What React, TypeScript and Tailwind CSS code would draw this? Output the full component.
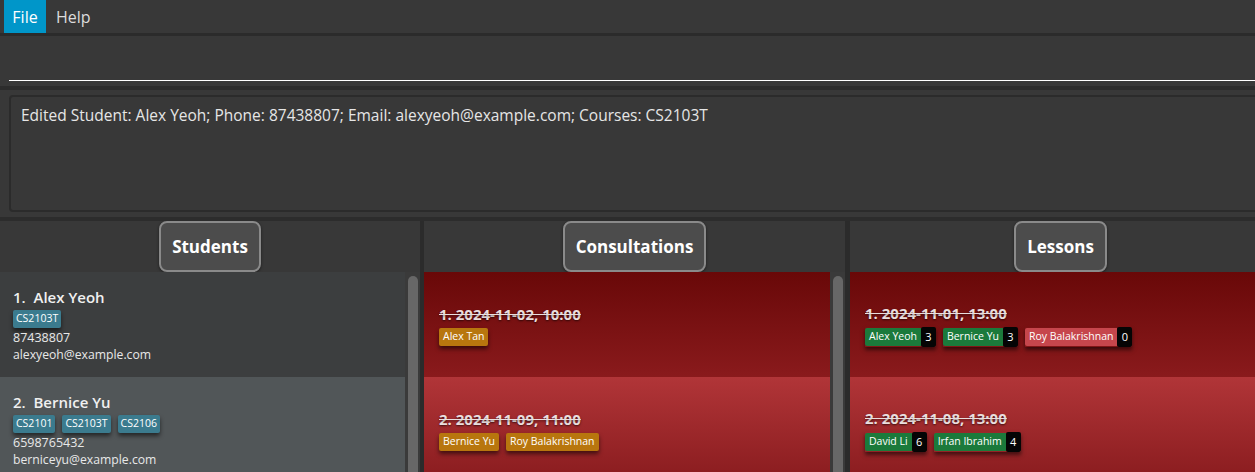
import React from "react";

const STUDENTS = [
  { name: "1.  Alex Yeoh", tags: ["CS2103T"], phone: "87438807", email: "alexyeoh@example.com", bg: "bg-[#3c3e3f]" },
  { name: "2.  Bernice Yu", tags: ["CS2101", "CS2103T", "CS2106"], phone: "6598765432", email: "berniceyu@example.com", bg: "bg-[#515658]" },
];

const CONSULTATIONS = [
  { title: "1. 2024-11-02, 10:00", names: ["Alex Tan"] },
  { title: "2. 2024-11-09, 11:00", names: ["Bernice Yu", "Roy Balakrishnan"] },
];

const LESSONS = [
  {
    title: "1. 2024-11-01, 13:00",
    attendees: [
      { name: "Alex Yeoh", count: 3, present: true },
      { name: "Bernice Yu", count: 3, present: true },
      { name: "Roy Balakrishnan", count: 0, present: false },
    ],
  },
  {
    title: "2. 2024-11-08, 13:00",
    attendees: [
      { name: "David Li", count: 6, present: true },
      { name: "Irfan Ibrahim", count: 4, present: true },
    ],
  },
];

const CARD_BG = [
  "bg-gradient-to-b from-[#690808] to-[#8a1a1c]",
  "bg-gradient-to-b from-[#b13538] to-[#891b1e]",
];

function Header({ label }: { label: string }) {
  return (
    <div className="h-[51px] shrink-0 flex justify-center">
      <div className="h-[51px] px-[11px] flex items-center rounded-[8px] border-2 border-[#8a8a8a] bg-[#4c4c4c] text-[17px] font-bold text-white shadow-[0_1px_3px_rgba(0,0,0,0.5)]">
        {label}
      </div>
    </div>
  );
}

function Scrollbar() {
  return (
    <div className="w-[15px] shrink-0 bg-[#3a3a3a] pt-[4px] pl-[3px]">
      <div className="w-[10px] h-[260px] rounded-[5px] bg-[#676767]" />
    </div>
  );
}

function Chip({ children, className }: { children: React.ReactNode; className: string }) {
  return (
    <span className={`h-[18px] flex items-center rounded-[2px] text-[10.5px] leading-none text-white shadow-[0_3px_4px_rgba(0,0,0,0.55)] ${className}`}>
      {children}
    </span>
  );
}

function DateTitle({ text }: { text: string }) {
  return (
    <div className="text-[15px] leading-[20px] font-bold text-[#eadede] line-through decoration-1 [text-shadow:0_1px_2px_rgba(0,0,0,0.6)]">
      {text}
    </div>
  );
}

export default function App() {
  return (
    <div className="w-[1255px] h-[472px] overflow-hidden bg-[#383838] font-['Open_Sans',sans-serif]">
      <div className="w-[1272px]">
        {/* menu */}
        <div className="h-[33px] flex items-stretch text-[16px]">
          <div className="ml-[4px] w-[42px] bg-[#0096c9] text-white flex items-center justify-center">File</div>
          <div className="px-[10px] text-[#dcdcdc] flex items-center">Help</div>
        </div>
        <div className="h-[3px] bg-[#2b2b2b]" />

        {/* command box */}
        <div className="h-[50px] px-[9px] pt-[44px]">
          <div className="h-[1px] bg-white" />
        </div>
        <div className="h-[4px] bg-[#2c2c2c]" />

        {/* result display */}
        <div className="h-[127px] pt-[5px] pl-[9px]">
          <div className="h-[117px] border-2 border-[#2b2b2b] rounded-[4px] px-[10px] pt-[7px] text-[15.5px] text-[#e6e6e6]">
            Edited Student: Alex Yeoh; Phone: 87438807; Email: alexyeoh@example.com; Courses: CS2103T
          </div>
        </div>
        <div className="h-[4px] bg-[#2c2c2c]" />

        {/* panels */}
        <div className="h-[251px] flex">
          <section className="w-[420px] shrink-0 flex flex-col overflow-hidden">
            <Header label="Students" />
            <div className="flex-1 flex min-h-0">
              <div className="flex-1">
                {STUDENTS.map((s) => (
                  <div key={s.email} className={`h-[105px] px-[13px] flex flex-col justify-center ${s.bg}`}>
                    <div className="text-[15px] leading-[20px] font-semibold text-[#f0f0f0] whitespace-pre">{s.name}</div>
                    <div className="flex gap-[7px] mt-[3px]">
                      {s.tags.map((t) => (
                        <Chip key={t} className="px-[3px] bg-[#3b7b8e]">{t}</Chip>
                      ))}
                    </div>
                    <div className="text-[12.5px] leading-[17px] text-[#e8e8e8] mt-[1px]">{s.phone}</div>
                    <div className="text-[12.2px] leading-[17px] text-[#e8e8e8]">{s.email}</div>
                  </div>
                ))}
              </div>
              <Scrollbar />
            </div>
          </section>
          <div className="w-[4px] shrink-0 bg-[#2b2b2b]" />

          <section className="w-[421px] shrink-0 flex flex-col overflow-hidden">
            <Header label="Consultations" />
            <div className="flex-1 flex min-h-0">
              <div className="flex-1">
                {CONSULTATIONS.map((c, i) => (
                  <div key={c.title} className={`h-[105px] px-[15px] flex flex-col justify-center ${CARD_BG[i]}`}>
                    <DateTitle text={c.title} />
                    <div className="flex gap-[7px] mt-[4px]">
                      {c.names.map((n) => (
                        <Chip key={n} className="px-[4px] bg-[#b8760e]">{n}</Chip>
                      ))}
                    </div>
                  </div>
                ))}
              </div>
              <Scrollbar />
            </div>
          </section>
          <div className="w-[5px] shrink-0 bg-[#2b2b2b]" />

          <section className="w-[421px] shrink-0 flex flex-col overflow-hidden">
            <Header label="Lessons" />
            <div className="flex-1 min-h-0">
              {LESSONS.map((l, i) => (
                <div key={l.title} className={`h-[105px] px-[15px] flex flex-col justify-center ${CARD_BG[i]}`}>
                  <DateTitle text={l.title} />
                  <div className="flex gap-[7px] mt-[4px]">
                    {l.attendees.map((a) => (
                      <div key={a.name} className="flex items-center shadow-[0_3px_4px_rgba(0,0,0,0.55)]">
                        <span className={`h-[18px] px-[4px] flex items-center rounded-l-[2px] text-[10.5px] leading-none text-white ${a.present ? "bg-[#1b7a3b]" : "bg-[#c6464c]"}`}>
                          {a.name}
                        </span>
                        <span className="h-[20px] w-[15px] flex items-center justify-center rounded-[2px] bg-[#050505] text-[11px] leading-none text-white">
                          {a.count}
                        </span>
                      </div>
                    ))}
                  </div>
                </div>
              ))}
            </div>
          </section>
        </div>
      </div>
    </div>
  );
}
